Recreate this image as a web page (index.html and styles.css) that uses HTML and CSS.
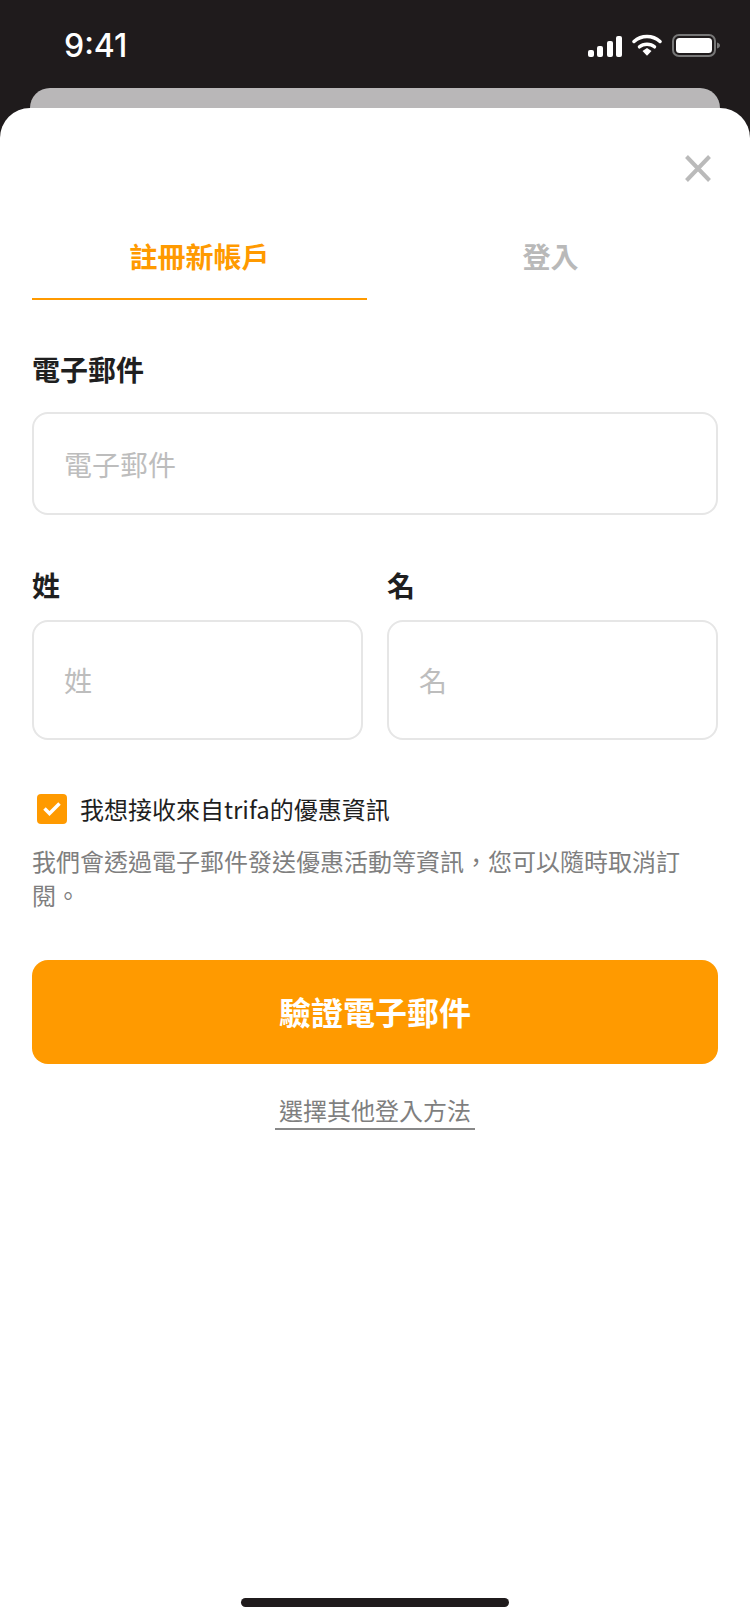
FILE: index.html
```html
<!DOCTYPE html>
<html lang="zh-Hant">
<head>
    <meta charset="UTF-8">
    <meta name="viewport" content="width=device-width, initial-scale=1.0">
    <title>註冊新帳戶</title>
    <link rel="stylesheet" href="styles.css">
</head>
<body>
    <div class="status-bar">
        <span class="time">9:41</span>
        <div class="status-icons">
            <svg class="signal" width="34" height="21" viewBox="0 0 34 21"><rect x="0" y="14" width="6" height="7" rx="2"/><rect x="9" y="10" width="6" height="11" rx="2"/><rect x="19" y="5" width="6" height="16" rx="2"/><rect x="28" y="0" width="6" height="21" rx="2"/></svg>
            <svg class="wifi" width="30" height="22" viewBox="0 0 30 22"><path d="M2 7.500C9.500 0.800 20.500 0.800 28 7.500" fill="none" stroke="#fff" stroke-width="3.500" stroke-linecap="round"/><path d="M7.500 12.800C11.500 9.300 18.500 9.300 22.500 12.800" fill="none" stroke="#fff" stroke-width="3.500" stroke-linecap="round"/><path d="M10.500 17L15 14L19.500 17L15 21.800Z" fill="#fff"/></svg>
            <svg class="battery" width="48" height="23" viewBox="0 0 48 23"><rect x="1" y="1" width="42" height="21" rx="6" fill="none" stroke="#777" stroke-width="2"/><rect x="4" y="4" width="36" height="15" rx="3.500" fill="#fff"/><path d="M45 8.500C47 9.200 48 10.200 48 11.500C48 12.800 47 13.800 45 14.500Z" fill="#777"/></svg>
        </div>
    </div>
    <div class="peek"></div>

    <div class="sheet">
        <div class="close-row">
            <svg class="close" width="26" height="27" viewBox="0 0 26 27"><path d="M1.500 1.500L24.500 25.500M24.500 1.500L1.500 25.500" fill="none" stroke="#bababa" stroke-width="4"/></svg>
        </div>

        <div class="tabs">
            <div class="tab active">註冊新帳戶</div>
            <div class="tab">登入</div>
        </div>

        <form class="form">
            <label class="field-label">電子郵件</label>
            <div class="input email-input">電子郵件</div>

            <div class="name-row">
                <div class="name-col">
                    <label class="field-label">姓</label>
                    <div class="input name-input">姓</div>
                </div>
                <div class="name-col">
                    <label class="field-label">名</label>
                    <div class="input name-input">名</div>
                </div>
            </div>

            <div class="check-row">
                <span class="checkbox">
                    <svg width="18" height="14" viewBox="0 0 18 14"><path d="M1.500 6.500L6.500 11.500L16.500 1.500" fill="none" stroke="#fff" stroke-width="3.500"/></svg>
                </span>
                <span class="check-text">我想接收來自trifa的優惠資訊</span>
            </div>
            <p class="note">我們會透過電子郵件發送優惠活動等資訊，您可以隨時取消訂閱。</p>

            <button class="submit" type="button">驗證電子郵件</button>
            <div class="other-row">
                <a class="other-link">選擇其他登入方法</a>
            </div>
        </form>

        <div class="home-indicator"></div>
    </div>
</body>
</html>
```

FILE: styles.css
```css
* {
    box-sizing: border-box;
}

body {
    margin: 0;
    width: 750px;
    height: 1624px;
    display: flex;
    flex-direction: column;
    background-color: #1f1b1c;
    font-family: "Noto Sans CJK TC", "Noto Sans", sans-serif;
    overflow: hidden;
}

.status-bar {
    height: 88px;
    flex-shrink: 0;
    display: flex;
    justify-content: space-between;
    align-items: flex-start;
    padding: 24px 30px 0 64px;
}

.time {
    font-family: Inter, sans-serif;
    font-size: 32px;
    line-height: 44px;
    font-weight: 500;
    color: #fff;
}

.status-icons {
    display: flex;
    align-items: flex-start;
    gap: 10px;
    padding-top: 10px;
}

.signal {
    fill: #fff;
    margin-top: 2px;
}

.peek {
    height: 20px;
    flex-shrink: 0;
    margin: 0 30px;
    background-color: #b9b7b8;
    border-radius: 20px 20px 0 0;
}

.sheet {
    flex: 1;
    display: flex;
    flex-direction: column;
    background-color: #fff;
    border-radius: 30px 30px 0 0;
    padding: 47px 32px 17px;
}

.close-row {
    display: flex;
    justify-content: flex-end;
    padding-right: 7px;
}

.tabs {
    display: grid;
    grid-template-columns: 335px 1fr;
    margin-top: 40px;
}

.tab {
    height: 78px;
    padding-top: 14px;
    text-align: center;
    font-size: 28px;
    line-height: 40px;
    font-weight: 700;
    color: #b9b9b9;
}

.tab:not(.active) {
    padding-left: 16px;
}

.tab.active {
    color: #ff9a00;
    border-bottom: 2px solid #ff9a00;
}

.form {
    display: flex;
    flex-direction: column;
}

.field-label {
    display: block;
    font-size: 28px;
    line-height: 40px;
    font-weight: 700;
    color: #1f1f1f;
}

.form > .field-label {
    margin-top: 49px;
}

.input {
    display: flex;
    align-items: center;
    padding-left: 30px;
    border: 2px solid #e6e6e6;
    border-radius: 16px;
    font-size: 28px;
    color: #bdbdbd;
}

.email-input {
    height: 103px;
    margin-top: 23px;
}

.name-row {
    display: grid;
    grid-template-columns: 331px 1fr;
    gap: 24px;
    margin-top: 50px;
}

.name-input {
    height: 120px;
    margin-top: 15px;
}

.check-row {
    display: flex;
    align-items: center;
    gap: 13px;
    margin-top: 52px;
    padding-left: 5px;
}

.checkbox {
    width: 30px;
    height: 30px;
    display: flex;
    align-items: center;
    justify-content: center;
    background-color: #ff9a00;
    border-radius: 4px;
}

.check-text {
    font-size: 24px;
    line-height: 34px;
    color: #1f1f1f;
}

.note {
    margin: 18px 0 0;
    font-size: 24px;
    line-height: 34px;
    color: #7f7f7f;
}

.submit {
    height: 104px;
    margin-top: 48px;
    padding: 0 0 3px;
    background-color: #ff9a00;
    color: #fff;
    border: none;
    border-radius: 16px;
    font-family: inherit;
    font-size: 32px;
    font-weight: 700;
}

.other-row {
    display: flex;
    justify-content: center;
    margin-top: 28px;
}

.other-link {
    padding: 0 4px;
    border-bottom: 2px solid #888;
    font-size: 24px;
    line-height: 36px;
    color: #7f7f7f;
}

.home-indicator {
    width: 268px;
    height: 9px;
    margin: auto auto 0;
    background-color: #1f1b1c;
    border-radius: 5px;
}
```
